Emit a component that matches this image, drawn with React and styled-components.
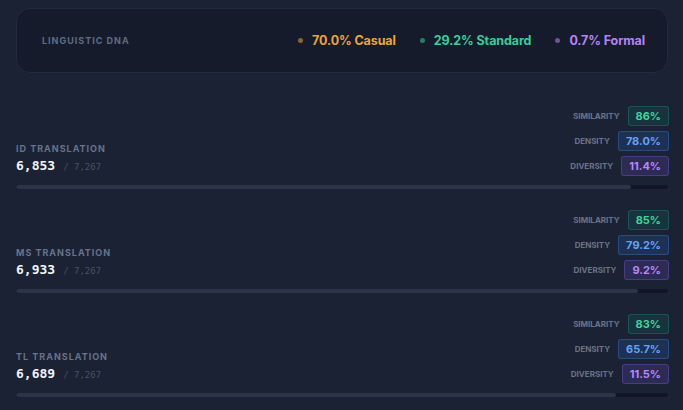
import React from "react";
import styled, { createGlobalStyle } from "styled-components";

const GlobalStyle = createGlobalStyle`
  html, body {
    margin: 0;
    padding: 0;
    background: #1a2234;
  }
  body {
    font-family: Inter, "Noto Sans", sans-serif;
    -webkit-font-smoothing: antialiased;
  }
`;

const TONES = {
  casual: "#eaa43a",
  standard: "#36cf99",
  formal: "#b683f5",
};

const CHIP_TONES = {
  similarity: { fg: "#3fd49b", bg: "rgba(16, 185, 129, 0.12)", border: "rgba(16, 185, 129, 0.28)" },
  density: { fg: "#62a4f7", bg: "rgba(59, 130, 246, 0.16)", border: "rgba(59, 130, 246, 0.32)" },
  diversity: { fg: "#bd86f8", bg: "rgba(139, 92, 246, 0.16)", border: "rgba(139, 92, 246, 0.32)" },
};

const Page = styled.div`
  padding: 8px 14px 0 16px;
  min-height: 410px;
  box-sizing: border-box;
`;

const DnaCard = styled.div`
  height: 65px;
  margin-right: 1px;
  box-sizing: border-box;
  display: flex;
  align-items: center;
  justify-content: space-between;
  padding: 0 22px 0 25px;
  background: #151b2b;
  border: 1px solid #222b3d;
  border-radius: 14px;
`;

const Eyebrow = styled.div`
  font-size: 9px;
  font-weight: 700;
  letter-spacing: 1px;
  text-transform: uppercase;
  color: #5f6b82;
`;

const Legend = styled.div`
  display: flex;
  align-items: center;
  gap: 24px;
`;

const LegendItem = styled.div`
  display: flex;
  align-items: center;
  gap: 9px;
  font-size: 12.5px;
  font-weight: 700;
  letter-spacing: -0.1px;
  color: ${(p) => p.color};

  &::before {
    content: "";
    width: 5px;
    height: 5px;
    border-radius: 50%;
    background: ${(p) => p.color};
    opacity: 0.55;
  }
`;

const Rows = styled.div`
  margin-top: 33px;
  display: flex;
  flex-direction: column;
  gap: 21px;
`;

const Row = styled.div`
  display: flex;
  flex-direction: column;
  gap: 9px;
`;

const RowTop = styled.div`
  display: flex;
  justify-content: space-between;
  align-items: flex-end;
`;

const Counts = styled.div`
  display: flex;
  flex-direction: column;
  gap: 4px;
  padding-bottom: 3px;
`;

const RowLabel = styled(Eyebrow)`
  color: #68738a;
`;

const CountLine = styled.div`
  display: flex;
  align-items: baseline;
  gap: 8px;
  font-family: "DejaVu Sans Mono", monospace;
`;

const Count = styled.span`
  font-size: 13px;
  font-weight: 700;
  color: #f1f4f9;
`;

const Total = styled.span`
  font-size: 9px;
  color: #465166;
`;

const Metrics = styled.div`
  display: flex;
  flex-direction: column;
  align-items: flex-end;
  gap: 5px;
`;

const Metric = styled.div`
  display: flex;
  align-items: center;
  gap: 8px;
`;

const MetricName = styled.span`
  font-size: 8px;
  font-weight: 700;
  text-transform: uppercase;
  color: #6a7488;
`;

const Chip = styled.span`
  height: 20px;
  box-sizing: border-box;
  display: inline-flex;
  align-items: center;
  padding: 0 7px;
  font-size: 11px;
  font-weight: 700;
  border-radius: 3px;
  color: ${(p) => CHIP_TONES[p.tone].fg};
  background: ${(p) => CHIP_TONES[p.tone].bg};
  border: 1px solid ${(p) => CHIP_TONES[p.tone].border};
`;

const Track = styled.div`
  height: 4px;
  margin-right: 1px;
  border-radius: 2px;
  background: #111726;
  overflow: hidden;
`;

const Fill = styled.div`
  height: 100%;
  background: #2c3447;
  border-radius: 2px;
`;

const TOTAL = 7267;

const translations = [
  { code: "ID", count: 6853, similarity: "86%", density: "78.0%", diversity: "11.4%" },
  { code: "MS", count: 6933, similarity: "85%", density: "79.2%", diversity: "9.2%" },
  { code: "TL", count: 6689, similarity: "83%", density: "65.7%", diversity: "11.5%" },
];

const fmt = (n) => n.toLocaleString("en-US");

export default function App() {
  return (
    <Page>
      <GlobalStyle />
      <DnaCard>
        <Eyebrow>Linguistic DNA</Eyebrow>
        <Legend>
          <LegendItem color={TONES.casual}>70.0% Casual</LegendItem>
          <LegendItem color={TONES.standard}>29.2% Standard</LegendItem>
          <LegendItem color={TONES.formal}>0.7% Formal</LegendItem>
        </Legend>
      </DnaCard>

      <Rows>
        {translations.map((t) => (
          <Row key={t.code}>
            <RowTop>
              <Counts>
                <RowLabel>{t.code} Translation</RowLabel>
                <CountLine>
                  <Count>{fmt(t.count)}</Count>
                  <Total>/ {fmt(TOTAL)}</Total>
                </CountLine>
              </Counts>
              <Metrics>
                <Metric>
                  <MetricName>Similarity</MetricName>
                  <Chip tone="similarity">{t.similarity}</Chip>
                </Metric>
                <Metric>
                  <MetricName>Density</MetricName>
                  <Chip tone="density">{t.density}</Chip>
                </Metric>
                <Metric>
                  <MetricName>Diversity</MetricName>
                  <Chip tone="diversity">{t.diversity}</Chip>
                </Metric>
              </Metrics>
            </RowTop>
            <Track>
              <Fill style={{ width: `${(t.count / TOTAL) * 100}%` }} />
            </Track>
          </Row>
        ))}
      </Rows>
    </Page>
  );
}
